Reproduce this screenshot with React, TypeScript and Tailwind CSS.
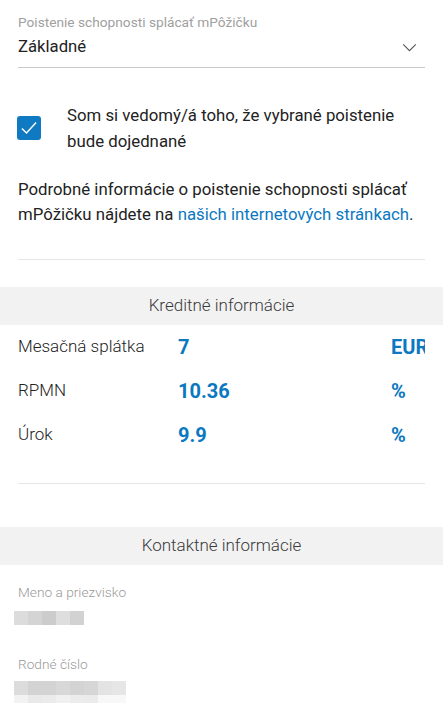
const blue = "text-[#0b78c1]";

const mosaicA = ["#dcdcdc", "#d4d4d4", "#cccccc", "#dedede", "#d2d2d2"];
const mosaicB = [
  ["#dcdcdc", "#d3d3d3", "#d3d3d3", "#d8d8d8", "#d3d3d3", "#d6d6d6", "#e3e3e3", "#e6e6e6"],
  ["#f2f2f2", "#e9e9e9", "#ebebeb", "#f0f0f0", "#ececec", "#ebebeb", "#f8f8f8", "#f8f8f8"],
];

const rows = [
  { label: "Mesačná splátka", value: "7", unit: "EUR" },
  { label: "RPMN", value: "10.36", unit: "%" },
  { label: "Úrok", value: "9.9", unit: "%" },
];

function Band({ title }: { title: string }) {
  return (
    <div className="h-[38px] bg-[#f2f2f2] flex items-center justify-center text-[17px] font-light text-[#3a3a3a]">
      {title}
    </div>
  );
}

function Mosaic({ cells, h }: { cells: string[]; h: string }) {
  return (
    <div className="flex">
      {cells.map((c, i) => (
        <div key={i} className={`w-[14px] ${h}`} style={{ backgroundColor: c }} />
      ))}
    </div>
  );
}

export default function App() {
  return (
    <div className="w-[443px] h-[705px] overflow-hidden bg-white font-['Roboto',sans-serif] text-[#222]">
      {/* select */}
      <div className="mx-[18px] pt-[14px] pb-[8px] border-b border-[#c8c8c8]">
        <div className="text-[13.7px] leading-[16px] text-[#a0a0a0]">Poistenie schopnosti splácať mPôžičku</div>
        <div className="mt-[5px] flex items-center justify-between">
          <span className="text-[16.7px] leading-[24px]">Základné</span>
          <svg viewBox="0 0 16 10" className="w-[15px] h-[9px] mr-[8px]" fill="none" stroke="#555" strokeWidth="1.2">
            <path d="M1 1.5 L8 8.5 L15 1.5" />
          </svg>
        </div>
      </div>

      {/* consent */}
      <div className="mt-[34px] pl-[17px] pr-[18px] flex items-center gap-[26px]">
        <div className="w-[24px] h-[24px] shrink-0 rounded-[3px] bg-[#0f79c2] flex items-center justify-center">
          <svg viewBox="0 0 24 24" className="w-[20px] h-[20px]" fill="none" stroke="white" strokeWidth="1.7">
            <path d="M3.5 12.5 L9 18 L20.5 5.5" />
          </svg>
        </div>
        <p className="text-[16.8px] leading-[26px]">Som si vedomý/á toho, že vybrané poistenie bude dojednané</p>
      </div>

      <p className="mt-[23px] px-[18px] text-[16.8px] leading-[25px]">
        Podrobné informácie o poistenie schopnosti splácať mPôžičku nájdete na{" "}
        <span className={blue}>našich internetových stránkach</span>.
      </p>

      <div className="mt-[32px] mx-[18px] border-t border-[#e6e6e6]" />

      <div className="mt-[27px]">
        <Band title="Kreditné informácie" />
      </div>

      <div className="pl-[18px]">
        {rows.map((r) => (
          <div key={r.label} className="h-[44px] flex items-center">
            <span className="w-[160px] text-[17px] font-light">{r.label}</span>
            <span className={`w-[213px] text-[20px] font-bold ${blue}`}>{r.value}</span>
            <span className={`w-[34px] overflow-hidden whitespace-nowrap text-[20px] font-bold ${blue}`}>{r.unit}</span>
          </div>
        ))}
      </div>

      <div className="mt-[26px] mx-[18px] border-t border-[#e6e6e6]" />

      <div className="mt-[43px]">
        <Band title="Kontaktné informácie" />
      </div>

      <div className="pl-[18px] mt-[19px] text-[13.7px] leading-[16px] font-light text-[#9a9a9a]">Meno a priezvisko</div>
      <div className="pl-[14px] mt-[11px]">
        <Mosaic cells={mosaicA} h="h-[14px]" />
      </div>

      <div className="pl-[18px] mt-[31px] text-[13.7px] leading-[16px] font-light text-[#9a9a9a]">Rodné číslo</div>
      <div className="pl-[14px] mt-[9px]">
        <Mosaic cells={mosaicB[0]} h="h-[14px]" />
        <Mosaic cells={mosaicB[1]} h="h-[8px]" />
      </div>
    </div>
  );
}
